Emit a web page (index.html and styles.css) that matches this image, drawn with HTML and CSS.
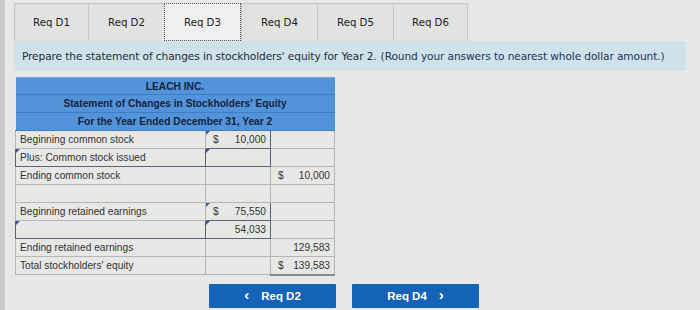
FILE: index.html
```html
<!DOCTYPE html>
<html>
<head>
<meta charset="utf-8">
<link rel="stylesheet" href="styles.css">
</head>
<body>
<div class="page">
  <div class="tabs">
    <div class="tab">Req D1</div>
    <div class="tab">Req D2</div>
    <div class="tab active">Req D3</div>
    <div class="tab">Req D4</div>
    <div class="tab">Req D5</div>
    <div class="tab">Req D6</div>
  </div>
  <div class="instr">Prepare the statement of changes in stockholders' equity for Year 2. <span class="blue">(Round your answers to nearest whole dollar amount.)</span></div>
  <table class="stmt">
    <tr class="hd"><td colspan="3">LEACH INC.</td></tr>
    <tr class="hd"><td colspan="3">Statement of Changes in Stockholders' Equity</td></tr>
    <tr class="hd"><td colspan="3">For the Year Ended December 31, Year 2</td></tr>
    <tr><td class="lbl">Beginning common stock</td><td class="inp mark"><span class="cur">$</span><span class="num">10,000</span></td><td></td></tr>
    <tr><td class="lbl inpl mark">Plus: Common stock issued</td><td class="inp mark"></td><td></td></tr>
    <tr><td class="lbl">Ending common stock</td><td></td><td class="amt"><span class="cur">$</span><span class="num">10,000</span></td></tr>
    <tr><td class="lbl"></td><td></td><td></td></tr>
    <tr><td class="lbl">Beginning retained earnings</td><td class="inp mark"><span class="cur">$</span><span class="num">75,550</span></td><td></td></tr>
    <tr><td class="lbl inpl mark"></td><td class="inp mark"><span class="num">54,033</span></td><td></td></tr>
    <tr><td class="lbl">Ending retained earnings</td><td></td><td class="amt"><span class="num">129,583</span></td></tr>
    <tr><td class="lbl">Total stockholders' equity</td><td></td><td class="amt total"><span class="cur">$</span><span class="num">139,583</span></td></tr>
  </table>
  <div class="nav">
    <div class="btn"><span class="arr">&lsaquo;</span>Req D2</div>
    <div class="btn"><span>Req D4</span><span class="arr r">&rsaquo;</span></div>
  </div>
</div>
</body>
</html>
```
FILE: styles.css
```css
html, body {
  margin: 0;
  padding: 0;
  background: #e7e8e6;
}
body {
  width: 700px;
  height: 310px;
  overflow: hidden;
  border-left: 5px solid #c9cac8;
  box-sizing: border-box;
}
.page {
  padding: 3px 0 0 9px;
  width: 672px;
}
.tabs {
  display: flex;
  height: 38px;
}
.tab {
  width: 76px;
  height: 38px;
  box-sizing: border-box;
  border: 1px solid #c6c7c5;
  border-right: none;
  border-bottom: none;
  background: #e2e3e1;
  display: flex;
  align-items: center;
  justify-content: center;
  font-family: "DejaVu Sans", Verdana, sans-serif;
  font-size: 10.2px;
  color: #222;
}
.tab:first-child { width: 74px; }
.tab:last-child { border-right: 1px solid #c6c7c5; width: 75px; }
.tab.active {
  background: #eff0ee;
  border: 1px dotted #555;
  width: 77px;
}
.instr {
  background: #cfe2ea;
  height: 30px;
  box-sizing: border-box;
  padding: 0 0 0 8px;
  display: flex;
  align-items: center;
  font-family: "DejaVu Sans", Verdana, sans-serif;
  font-size: 10.6px;
  letter-spacing: -0.1px;
  color: #222c36;
  white-space: nowrap;
  overflow: hidden;
}
.instr .blue { color: #22325a; margin-left: 4px; }
.stmt {
  margin-top: 6px;
  margin-left: 1px;
  border-collapse: collapse;
  font-family: "Liberation Sans", Arial, sans-serif;
  font-size: 10.2px;
  color: #333;
}
.stmt td {
  border: 1px solid #b5b6b4;
  height: 18px;
  padding: 0 4px;
  box-sizing: border-box;
}
.stmt tr.hd td {
  background: #5393d9;
  color: #15233d;
  font-weight: bold;
  text-align: center;
  border: none;
  border-bottom: 1px solid #3f7ec4;
  height: 18px;
  padding: 0;
}
.stmt tr.hd:first-child td { border-top: 1px solid #7aa9dd; height: 17px; }
.stmt td.lbl { width: 190px; }
.stmt td:nth-child(2) { width: 65px; }
.stmt td:nth-child(3) { width: 64px; }
.stmt td.inp {
  border: 1.5px solid #59647a;
}
.stmt td.inpl {
  border: 1.5px solid #59647a;
}
.stmt td.mark {
  position: relative;
}
.stmt td.mark::before {
  content: "";
  position: absolute;
  left: 0;
  top: 0;
  border-left: 4px solid #3a5a9a;
  border-bottom: 4px solid transparent;
}
.stmt td.inp, .stmt td.amt {
  text-align: right;
}
.stmt td .cur { float: left; padding-left: 3px; }
.stmt td.total { border-bottom: 2px solid #888; }
.nav {
  display: flex;
  gap: 16px;
  margin: 8px 0 0 195px;
}
.btn {
  width: 127px;
  height: 24px;
  background: #1463b8;
  color: #fff;
  font-family: "Liberation Sans", Arial, sans-serif;
  font-weight: bold;
  font-size: 11.5px;
  display: flex;
  align-items: center;
  justify-content: center;
  gap: 12px;
  border-radius: 1px;
}
.btn .arr { font-size: 15px; line-height: 1; margin-top: -2px; }
```
